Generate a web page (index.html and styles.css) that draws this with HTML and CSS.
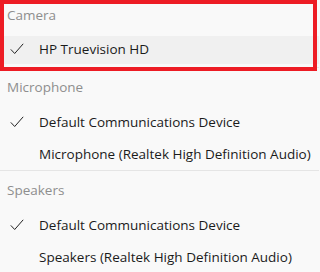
FILE: index.html
```html
<!DOCTYPE html>
<html>
<head>
<meta charset="utf-8">
<link rel="stylesheet" href="styles.css">
</head>
<body>
<div class="panel">
  <section class="group first">
    <div class="head">Camera</div>
    <div class="item hover">
      <span class="check"><svg width="14" height="12" viewBox="0 0 14 12"><path d="M0.8 6.4 L4.7 10.5 L13.2 0.8" fill="none" stroke="#222" stroke-width="1"/></svg></span>
      <span class="label">HP Truevision HD</span>
    </div>
  </section>
  <div class="sep"></div>
  <section class="group">
    <div class="head">Microphone</div>
    <div class="item">
      <span class="check"><svg width="14" height="12" viewBox="0 0 14 12"><path d="M0.8 6.4 L4.7 10.5 L13.2 0.8" fill="none" stroke="#222" stroke-width="1"/></svg></span>
      <span class="label">Default Communications Device</span>
    </div>
    <div class="item">
      <span class="check"></span>
      <span class="label">Microphone (Realtek High Definition Audio)</span>
    </div>
  </section>
  <div class="sep"></div>
  <section class="group">
    <div class="head">Speakers</div>
    <div class="item">
      <span class="check"><svg width="14" height="12" viewBox="0 0 14 12"><path d="M0.8 6.4 L4.7 10.5 L13.2 0.8" fill="none" stroke="#222" stroke-width="1"/></svg></span>
      <span class="label">Default Communications Device</span>
    </div>
    <div class="item">
      <span class="check"></span>
      <span class="label">Speakers (Realtek High Definition Audio)</span>
    </div>
  </section>
  <div class="mark"></div>
</div>
</body>
</html>
```
FILE: styles.css
```css
html, body {
  margin: 0;
  padding: 0;
  background: #f9f9f9;
}
body {
  width: 319px;
  height: 272px;
  overflow: hidden;
  font-family: "Open Sans", "Noto Sans", sans-serif;
  font-size: 13.5px;
  color: #1b1b1b;
}
.panel {
  position: relative;
  display: flex;
  flex-direction: column;
}
.group {
  display: flex;
  flex-direction: column;
}
.group.first {
  padding-bottom: 2px;
}
.head {
  height: 38px;
  box-sizing: border-box;
  padding: 9px 0 0 7px;
  line-height: 20px;
  color: #8e8e8e;
}
.group.first .head {
  height: 33px;
  padding-top: 5px;
}
.item {
  height: 32px;
  line-height: 32px;
  display: flex;
  align-items: center;
}
.item.hover {
  background: linear-gradient(#f0f0f0, #f0f0f0) 0 3px / 100% 28px no-repeat;
}
.check {
  flex-shrink: 0;
  width: 14px;
  height: 12px;
  margin-left: 10px;
  margin-right: 15px;
  display: flex;
}
.label {
  white-space: nowrap;
}
.sep {
  height: 1px;
  background: #e5e5e5;
}
.mark {
  position: absolute;
  left: 0;
  top: 0;
  width: 317px;
  height: 71px;
  box-sizing: border-box;
  border: 4px solid #ed1c24;
}
```
